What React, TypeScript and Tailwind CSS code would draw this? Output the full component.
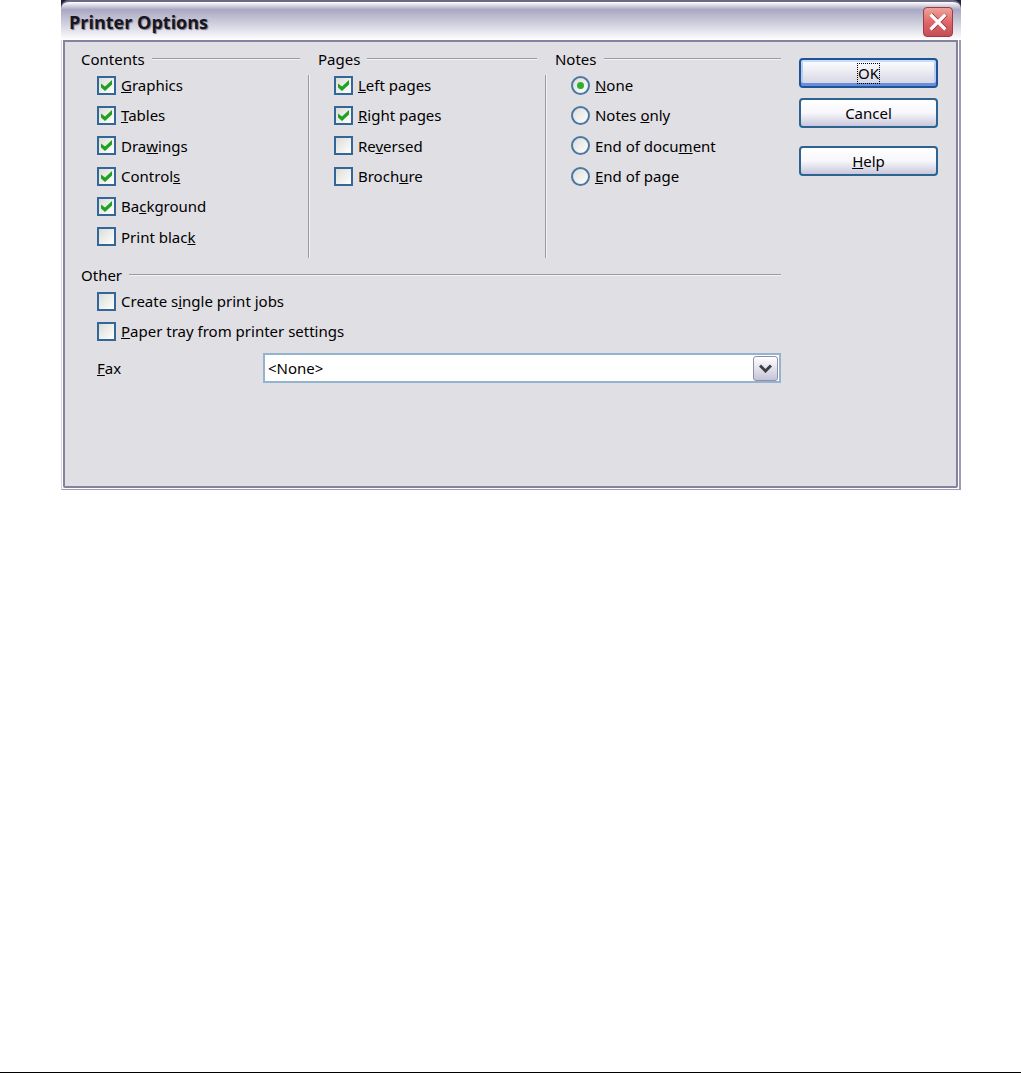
import type { ReactNode } from "react";

interface OptionProps {
    label: ReactNode;
    checked?: boolean;
}

interface GroupProps {
    title: string;
    children: ReactNode;
}

const contents: OptionProps[] = [
    { label: <><u>G</u>raphics</>, checked: true },
    { label: <><u>T</u>ables</>, checked: true },
    { label: <>Dra<u>w</u>ings</>, checked: true },
    { label: <>Control<u>s</u></>, checked: true },
    { label: <>Ba<u>c</u>kground</>, checked: true },
    { label: <>Print blac<u>k</u></> },
];

const pages: OptionProps[] = [
    { label: <><u>L</u>eft pages</>, checked: true },
    { label: <><u>R</u>ight pages</>, checked: true },
    { label: <>Re<u>v</u>ersed</> },
    { label: <>Broch<u>u</u>re</> },
];

const notes: OptionProps[] = [
    { label: <><u>N</u>one</>, checked: true },
    { label: <>Notes <u>o</u>nly</> },
    { label: <>End of docu<u>m</u>ent</> },
    { label: <><u>E</u>nd of page</> },
];

const other: OptionProps[] = [
    { label: <>Create s<u>i</u>ngle print jobs</> },
    { label: <><u>P</u>aper tray from printer settings</> },
];

function CheckOption({ label, checked }: OptionProps) {
    return (
        <label className="flex items-center gap-[5px] whitespace-nowrap">
            <span className="grid shrink-0 place-items-center">
                <input
                    type="checkbox"
                    defaultChecked={checked}
                    className="peer col-start-1 row-start-1 size-[19px] appearance-none border-2 border-[#33679a] bg-linear-to-br from-[#dcdcd7] to-white"
                />
                <svg
                    viewBox="0 0 11 11"
                    className="pointer-events-none invisible col-start-1 row-start-1 size-[11px] peer-checked:visible"
                >
                    <path d="M0 3.5 4 6.5 11 0v4.5L4 11 0 7.5z" fill="#21a121" />
                </svg>
            </span>
            <span>{label}</span>
        </label>
    );
}

function RadioOption({ label, checked }: OptionProps) {
    return (
        <label className="flex items-center gap-[5px] whitespace-nowrap">
            <span className="grid shrink-0 place-items-center">
                <input
                    type="radio"
                    name="notes"
                    defaultChecked={checked}
                    className="peer col-start-1 row-start-1 size-[19px] appearance-none rounded-full border-2 border-[#4a78a3] bg-linear-to-br from-[#dcdcd7] to-white"
                />
                <span className="pointer-events-none invisible col-start-1 row-start-1 size-[7px] rounded-full bg-[#2fae2f] peer-checked:visible" />
            </span>
            <span>{label}</span>
        </label>
    );
}

function Group({ title, children }: GroupProps) {
    return (
        <fieldset className="min-w-0">
            <legend className="flex h-[23px] w-full items-center gap-[7px]">
                {title}
                <span className="h-[2px] flex-1 border-t border-[#9b9a9f] bg-[#f3f3f6]" />
            </legend>
            {children}
        </fieldset>
    );
}

function Divider() {
    return <div className="mt-7 -mb-[6px] border-l border-[#9b9a9f] bg-[#f3f3f6]" />;
}

function PushButton({ children, primary }: { children: ReactNode; primary?: boolean }) {
    return (
        <button
            type="button"
            className={
                primary
                    ? "flex h-[30px] items-center justify-center rounded-[4px] border-2 border-[#1f5394] bg-linear-to-b from-white to-[#d3d3e3] shadow-[inset_0_2px_0_#c4dcff,inset_0_-3px_0_#6690dd,inset_2px_0_0_#b5cdf5,inset_-2px_0_0_#b5cdf5]"
                    : "flex h-[30px] items-center justify-center rounded-[4px] border-2 border-[#2d6291] bg-linear-to-b from-white via-[#f7f7fc] to-[#c9c8dc]"
            }
        >
            {children}
        </button>
    );
}

export default function App() {
    return (
        <main className="flex min-h-screen flex-col border-b border-black bg-white font-['Noto_Sans',sans-serif] text-[15px] leading-6 text-black">
            <section
                aria-labelledby="dialog-title"
                className="mr-[60px] ml-[61px] bg-[#242230]"
            >
                <header className="flex h-[40px] items-center justify-between rounded-t-[8px] border-t-2 border-[#6b6a84] bg-linear-to-b from-white via-[#a9a8c3] via-20% to-white pt-[2px] pr-2 pl-2">
                    <h1
                        id="dialog-title"
                        className="font-['Open_Sans',sans-serif] text-[18px] font-bold text-[#17171c] [text-shadow:1px_1px_1px_#77768f]"
                    >
                        Printer Options
                    </h1>
                    <button
                        type="button"
                        aria-label="Close"
                        className="grid size-[30px] place-items-center rounded-[4px] border border-[#a03a45] bg-linear-to-b from-[#eda39a] via-[#e0676a] to-[#c44e55]"
                    >
                        <svg viewBox="0 0 20 20" className="size-5">
                            <path d="M3 2.5 18 17.5M18 2.5 3 17.5" stroke="#8c303a" strokeWidth="4" />
                            <path d="M2.5 2.5 17.5 17.5M17.5 2.5 2.5 17.5" stroke="#fff" strokeWidth="3.2" />
                        </svg>
                    </button>
                </header>

                <div className="border-r-2 border-b border-l border-[#9d9cb4] border-l-[#d5d5e2] bg-white px-px pb-px">
                    <div className="flex min-h-[448px] items-start gap-[18px] rounded-b-[2px] border-2 border-[#8382a0] bg-[#e0dfe4] pt-[5px] pr-[18px] pl-4">
                        <div className="min-w-0 flex-1">
                            <div className="grid grid-cols-[31fr_2px_31fr_2px_32fr] gap-x-2">
                                <Group title="Contents">
                                    <div className="grid h-[182px] grid-rows-6 pl-4">
                                        {contents.map((option, i) => (
                                            <CheckOption key={i} {...option} />
                                        ))}
                                    </div>
                                </Group>
                                <Divider />
                                <Group title="Pages">
                                    <div className="grid h-[182px] grid-rows-6 pl-4">
                                        {pages.map((option, i) => (
                                            <CheckOption key={i} {...option} />
                                        ))}
                                    </div>
                                </Group>
                                <Divider />
                                <Group title="Notes">
                                    <div className="grid h-[182px] grid-rows-6 pl-4">
                                        {notes.map((option, i) => (
                                            <RadioOption key={i} {...option} />
                                        ))}
                                    </div>
                                </Group>
                            </div>

                            <div className="mt-[11px]">
                                <Group title="Other">
                                    <div className="grid h-[60px] grid-rows-2 pl-4">
                                        {other.map((option, i) => (
                                            <CheckOption key={i} {...option} />
                                        ))}
                                    </div>
                                    <div className="mt-[7px] flex items-center pl-4">
                                        <label htmlFor="fax" className="w-[166px]">
                                            <u>F</u>ax
                                        </label>
                                        <span className="grid flex-1 items-center">
                                            <select
                                                id="fax"
                                                className="col-start-1 row-start-1 h-[30px] appearance-none border-2 border-[#94b3cf] bg-white pl-[3px]"
                                            >
                                                <option>&lt;None&gt;</option>
                                            </select>
                                            <span className="pointer-events-none col-start-1 row-start-1 mr-[3px] grid h-[25px] w-[25px] place-items-center justify-self-end rounded-[3px] border border-[#8f8ea6] bg-linear-to-b from-white to-[#c5c4d8]">
                                                <svg viewBox="0 0 13 9" className="h-[9px] w-[13px]">
                                                    <path d="M1 1.5 6.5 7 12 1.5" fill="none" stroke="#3f3f45" strokeWidth="3" />
                                                </svg>
                                            </span>
                                        </span>
                                    </div>
                                </Group>
                            </div>
                        </div>

                        <div className="flex w-[139px] flex-col pt-[11px]">
                            <PushButton primary>
                                <span className="h-[21px] border border-dotted border-black leading-[19px]">OK</span>
                            </PushButton>
                            <div className="mt-[10px] flex flex-col gap-[18px]">
                                <PushButton>Cancel</PushButton>
                                <PushButton>
                                    <span>
                                        <u>H</u>elp
                                    </span>
                                </PushButton>
                            </div>
                        </div>
                    </div>
                </div>
            </section>
        </main>
    );
}
